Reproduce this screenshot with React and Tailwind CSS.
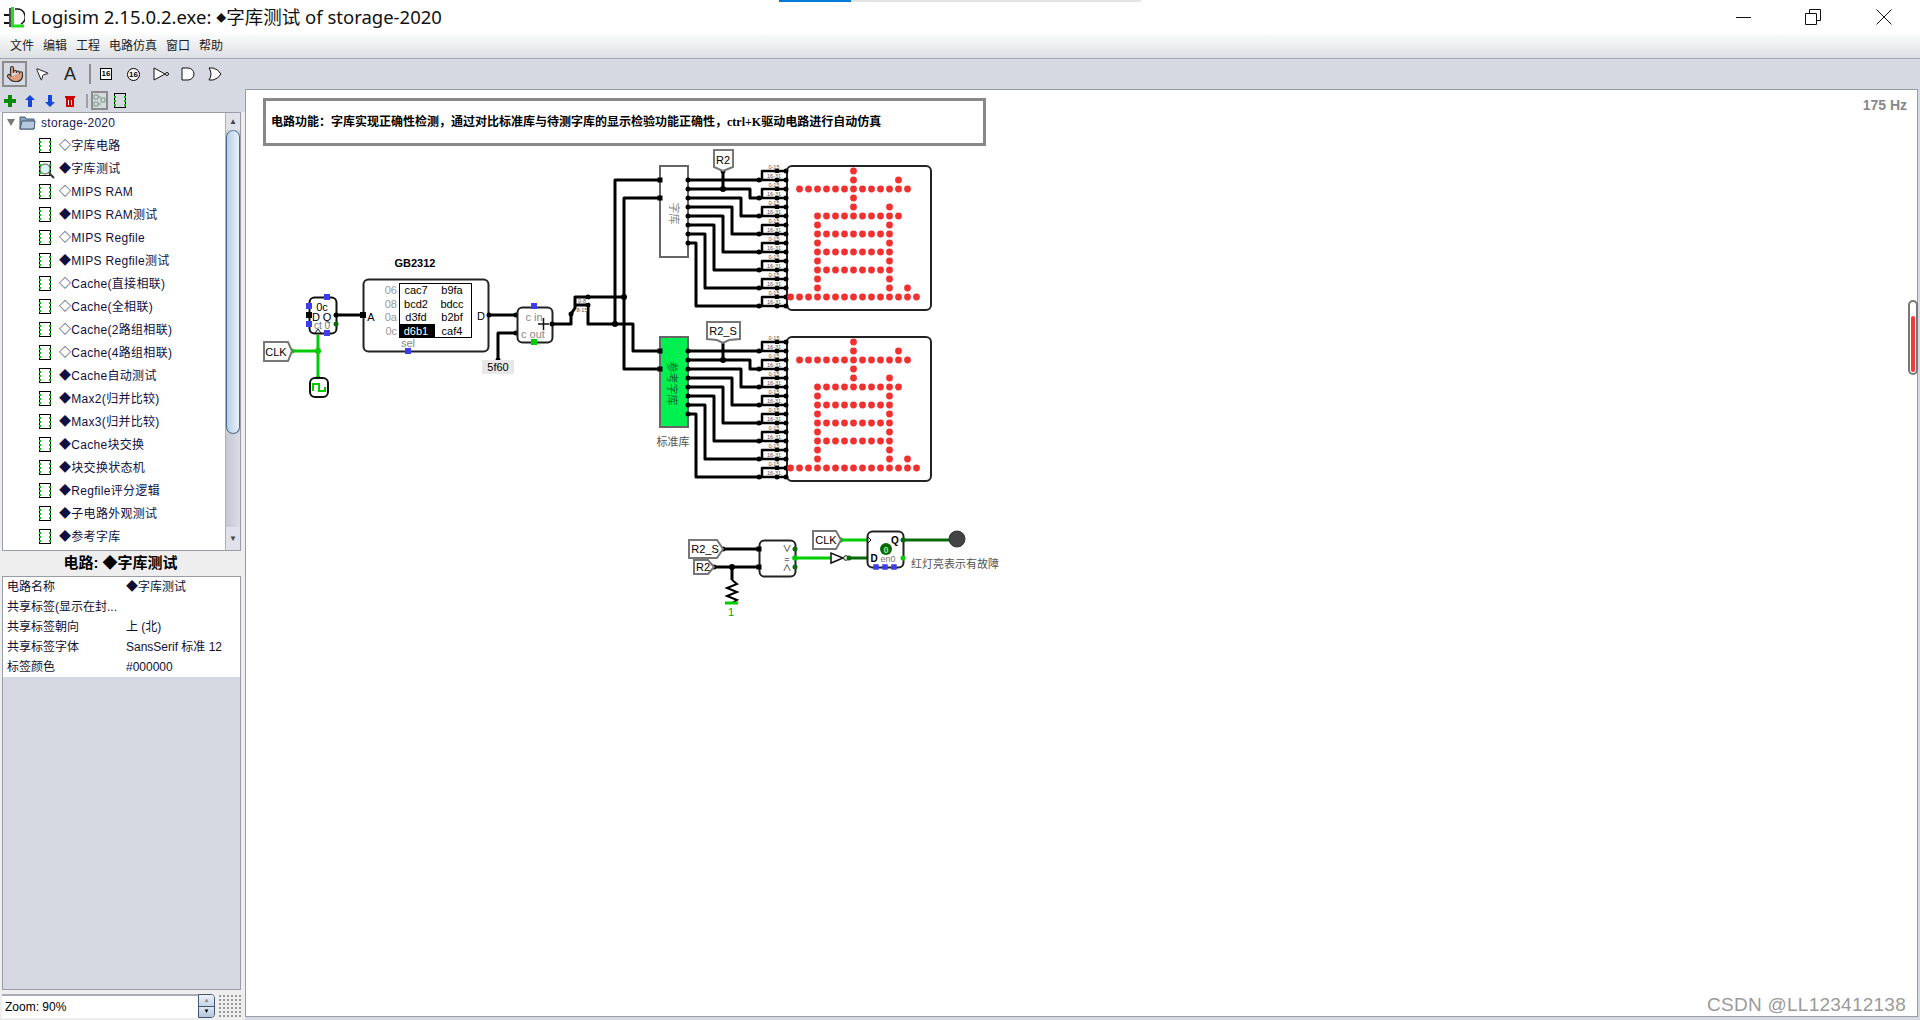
import { MousePointer2, Pointer } from "lucide-react";

const rows = [
  "◇字库电路", "◆字库测试", "◇MIPS RAM", "◆MIPS RAM测试", "◇MIPS Regfile", "◆MIPS Regfile测试",
  "◇Cache(直接相联)", "◇Cache(全相联)", "◇Cache(2路组相联)", "◇Cache(4路组相联)", "◆Cache自动测试",
  "◆Max2(归并比较)", "◆Max3(归并比较)", "◆Cache块交换", "◆块交换状态机", "◆Regfile评分逻辑",
  "◆子电路外观测试", "◆参考字库",
];

const props = [
  ["电路名称", "◆字库测试"],
  ["共享标签(显示在封...", ""],
  ["共享标签朝向", "上 (北)"],
  ["共享标签字体", "SansSerif 标准 12"],
  ["标签颜色", "#000000"],
];

const menus = ["文件", "编辑", "工程", "电路仿真", "窗口", "帮助"];

// 16x16 dot matrix, one [row, from, to] per run of lit dots
const lit = [
  [0, 7, 7], [1, 7, 7], [1, 12, 12], [2, 1, 13], [3, 7, 7], [4, 7, 7], [4, 11, 11], [5, 3, 12],
  [6, 3, 3], [6, 11, 11], [7, 3, 11], [8, 3, 3], [8, 11, 11], [9, 3, 11], [10, 3, 3], [10, 11, 11],
  [11, 3, 11], [12, 3, 3], [12, 11, 11], [13, 3, 3], [13, 11, 11], [13, 13, 13], [14, 0, 14],
];

const range = (n) => Array.from({ length: n }, (_, i) => i);

function Dot({ x, y, r = 2.5, fill = "#000" }) {
  return <circle cx={x} cy={y} r={r} fill={fill} />;
}

function Wire({ d, color = "#000", w = 3 }) {
  return <path d={d} fill="none" stroke={color} strokeWidth={w} strokeLinejoin="round" />;
}

function Sq({ x, y, fill = "#3c3cf0", s = 6 }) {
  return <rect x={x - s / 2} y={y - s / 2} width={s} height={s} fill={fill} />;
}

function Label({ x, y, size = 11, fill = "#000", bold, anchor = "middle", children }) {
  return (
    <text x={x} y={y} fontSize={size} fill={fill} fontWeight={bold ? 700 : 400} textAnchor={anchor} dominantBaseline="central">
      {children}
    </text>
  );
}

function Display({ dy, rom, fill }) {
  const ports = range(8).map((i) => 180 + i * 9 + dy);
  const ends = range(8).map((i) => 180 + i * 18 + dy);
  const bends = [759, 750, 741, 732, 723, 714, 705, 696];
  return (
    <g>
      <rect x="660" y={166 + dy} width="28" height={rom} fill={fill} stroke="#666" strokeWidth="2" />
      {ports.map((y, i) => (
        <g key={y}>
          <Wire d={`M688 ${y} H${bends[i]} V${ends[i]} H762`} />
          <Dot x={688} y={y} />
        </g>
      ))}
      <rect x="787" y={166 + dy} width="144" height="144" rx="5" fill="#fff" stroke="#222" strokeWidth="2" />
      {ends.map((y) => (
        <g key={y}>
          <Wire d={`M762 ${y} V${y - 9} H786 M762 ${y} H786`} w={2.5} />
          <Dot x={759} y={y} />
          <Dot x={777} y={y - 9} />
          <Dot x={777} y={y} />
          <Dot x={786} y={y - 9} />
          <Dot x={786} y={y} />
          <rect x="767" y={y - 7} width="14" height="5" fill="#fff" />
          <Label x={774} y={y - 13.5} size={5.5} fill="#555">0-15</Label>
          <Label x={774} y={y - 4.5} size={5.5} fill="#555">16-31</Label>
        </g>
      ))}
      {lit.map(([row, from, to]) =>
        range(to - from + 1).map((i) => (
          <circle key={`${row}-${from}-${i}`} cx={790.5 + (from + i) * 9} cy={171 + dy + row * 9} r="3.4" fill="#f23030" />
        )),
      )}
    </g>
  );
}

function Circuit() {
  return (
    <svg className="w-full h-full" viewBox="246 90 1671 926" preserveAspectRatio="xMinYMin meet">
      <rect x="264.5" y="99.5" width="720" height="45" fill="#fff" stroke="#888" strokeWidth="3" />
      <text x="271" y="122" fontSize="12" fontWeight="700" dominantBaseline="central">
        {"电路功能\uFF1A字库实现正确性检测\uFF0C通过对比标准库与待测字库的显示检验功能正确性\uFF0C"}
        <tspan fontFamily="Liberation Serif">ctrl+K</tspan>
        驱动电路进行自动仿真
      </text>

      <Label x={415} y={263} bold>GB2312</Label>

      {/* clock and counter */}
      <Wire d="M318 335 V378 M292 351 H318" color="#00cc00" />
      <Dot x={292} y={351} fill="#00cc00" />
      <Dot x={318} y={351} r={3} fill="#00cc00" />
      <Dot x={318} y={378} fill="#00cc00" />
      <path d="M264 342 H288 L292 351 L288 361 H264 Z" fill="#fff" stroke="#777" strokeWidth="2" />
      <Label x={276} y={351.5} size={11}>CLK</Label>
      <rect x="310" y="378" width="18" height="19" rx="5" fill="#fff" stroke="#111" strokeWidth="2" />
      <path d="M313 391 V384 H319 V391 H325 V387" fill="none" stroke="#00cc00" strokeWidth="2" />
      <rect x="309.5" y="297.5" width="27" height="36" rx="5" fill="#fff" stroke="#111" strokeWidth="2" />
      <Sq x={327} y={297} />
      <Sq x={309} y={306} />
      <Sq x={309} y={324} />
      <Sq x={327} y={333} />
      <Sq x={309} y={315} fill="#000" />
      <Dot x={336} y={324} r={2.5} fill="#0a6a0a" />
      <Label x={322} y={307} size={11}>0c</Label>
      <Label x={316} y={317} size={11}>D</Label>
      <Label x={327} y={317} size={11}>Q</Label>
      <Label x={322} y={325} size={10} fill="#777">ct 0</Label>
      <path d="M315 333 L318 329 L321 333" fill="none" stroke="#111" />
      <Wire d="M336 315 H363" />
      <Dot x={336} y={315} />

      {/* rom */}
      <rect x="363.5" y="279.5" width="125" height="72" rx="5" fill="#fff" stroke="#222" strokeWidth="2" />
      <Sq x={363} y={315} fill="#000" />
      <Label x={371} y={317} size={11}>A</Label>
      <Label x={481} y={316} size={11}>D</Label>
      <rect x="399.5" y="283.5" width="72" height="54" fill="#fff" stroke="#000" />
      <rect x="399" y="324" width="36" height="13" fill="#000" />
      {[["06", "cac7", "b9fa", 290], ["08", "bcd2", "bdcc", 304], ["0a", "d3fd", "b2bf", 317], ["0c", "d6b1", "caf4", 331]].map(([a, b, c, y]) => (
        <g key={a}>
          <Label x={397} y={y} anchor="end" fill="#999">{a}</Label>
          <Label x={416} y={y} fill={a === "0c" ? "#fff" : "#000"}>{b}</Label>
          <Label x={452} y={y}>{c}</Label>
        </g>
      ))}
      <Label x={408} y={343} fill="#888">sel</Label>
      <Sq x={408} y={351} />

      {/* adder and splitter */}
      <Wire d="M489 315 H517 M517 333 H498 V360" />
      <Dot x={489} y={315} />
      <Dot x={516} y={315} />
      <Dot x={516} y={333} />
      <Dot x={498} y={360} />
      <rect x="482" y="360" width="32" height="14" fill="#e8e8e8" />
      <Label x={498} y={367}>5f60</Label>
      <rect x="517.5" y="307.5" width="35" height="35" rx="5" fill="#fff" stroke="#222" strokeWidth="2" />
      <Sq x={534} y={306} />
      <Sq x={534} y={342} fill="#00cc00" />
      <Label x={534} y={317} fill="#888">c in</Label>
      <Label x={533} y={334} fill="#888">c out</Label>
      <path d="M538 324 H549 M543.500 318 V330" stroke="#111" strokeWidth="1.500" />
      <Dot x={552} y={324} />
      <Wire d="M552 324 H571 V314 L575 308 V297 H624 M575 305 H588 V324 H633 V351 H660" />
      <Dot x={571} y={314} />
      <Dot x={588} y={297} />
      <Dot x={588} y={305} />
      <rect x="577" y="299" width="11" height="4" fill="#fff" />
      <Label x={582} y={301} size={5.500} fill="#555">0-8</Label>
      <rect x="577" y="307" width="10" height="4" fill="#fff" />
      <Label x={582} y={310} size={5.500} fill="#555">8-15</Label>
      <Wire d="M660 198 H624 V369 H660 M660 180 H615 V324" />
      <Dot x={624} y={297} r={3} />
      <Dot x={615} y={324} r={3} />

      <Display dy={0} rom={91} fill="#fff" />
      <Display dy={171} rom={90} fill="#00f050" />
      <Sq x={660} y={180} fill="#000" s={5} />
      <Sq x={660} y={198} fill="#000" s={5} />
      <Sq x={660} y={351} fill="#000" s={5} />
      <Sq x={660} y={369} fill="#000" s={5} />
      <text transform="translate(674 213.500) rotate(90)" fontSize="11" fill="#888" textAnchor="middle" dominantBaseline="central">字库</text>
      <text transform="translate(672 383.500) rotate(90)" fontSize="11" fill="#0a6a30" textAnchor="middle" dominantBaseline="central">参考字库</text>
      <Label x={673} y={442} fill="#555">标准库</Label>

      {/* R2 tags */}
      <Wire d="M723 171 V189" />
      <Dot x={723} y={171} />
      <Dot x={723} y={189} r={3} />
      <path d="M714 150 H733 V167 L723 171 L714 167 Z" fill="#fff" stroke="#777" strokeWidth="2" />
      <Label x={723} y={160}>R2</Label>
      <Wire d="M723 343 V360" />
      <Dot x={723} y={360} r={3} />
      <path d="M707 322 H740 V339 L729 340 L723 343 L717 340 L707 339 Z" fill="#fff" stroke="#777" strokeWidth="2" />
      <Label x={723} y={331}>R2_S</Label>

      {/* comparator row */}
      <Wire d="M723 549 H759 M714 567 H759 M732 567 V580" />
      <Dot x={723} y={549} />
      <Dot x={714} y={567} />
      <Dot x={732} y={567} r={3} />
      <path d="M732 580 L737 584 L727 588 L737 592 L727 596 L737 600 L732 603" fill="none" stroke="#000" strokeWidth="2" />
      <Wire d="M725 603 H738" color="#00cc00" />
      <Label x={731} y={612} fill="#00aa00">1</Label>
      <path d="M689 540 H717 L723 549 L717 558 H689 Z" fill="#fff" stroke="#777" strokeWidth="2" />
      <Label x={705} y={549}>R2_S</Label>
      <path d="M694 560 H708 L714 567 L708 574 H694 Z" fill="#fff" stroke="#777" strokeWidth="2" />
      <Label x={703} y={567}>R2</Label>
      <rect x="759.500" y="540.500" width="36" height="36" rx="5" fill="#fff" stroke="#222" strokeWidth="2" />
      <Sq x={759} y={549} fill="#000" s={5} />
      <Sq x={759} y={567} fill="#000" s={5} />
      <Label x={787} y={549} size={9}>∨</Label>
      <Label x={787} y={558.500} size={9}>=</Label>
      <Label x={787} y={568} size={9}>∧</Label>
      <Wire d="M796 558 H831" color="#00cc00" />
      <Dot x={795} y={549} fill="#0a6a0a" />
      <Dot x={795} y={558} r={2.800} fill="#00cc00" />
      <Dot x={795} y={567} fill="#0a6a0a" />
      <path d="M831 553 V563 L843 558 Z" fill="#fff" stroke="#111" strokeWidth="1.500" />
      <circle cx="846" cy="558" r="2.300" fill="#fff" stroke="#111" />
      <Wire d="M849 558 H867" color="#0a6a0a" />
      <Dot x={849} y={558} fill="#0a6a0a" />
      <Wire d="M841 540 H867" color="#00cc00" />
      <Dot x={841} y={540} fill="#00cc00" />
      <path d="M813 531 H836 L841 540 L836 549 H813 Z" fill="#fff" stroke="#777" strokeWidth="2" />
      <Label x={826} y={540}>CLK</Label>
      <rect x="867.500" y="531.500" width="36" height="36" rx="5" fill="#fff" stroke="#222" strokeWidth="2" />
      <path d="M868 537 L871 540 L868 543" fill="none" stroke="#111" />
      <Label x={874} y={558} size={10} bold>D</Label>
      <Label x={895} y={540.500} size={10} bold>Q</Label>
      <circle cx="886" cy="549" r="6" fill="#0a6a0a" />
      <Label x={886} y={549.500} size={9} fill="#9be89b" bold>0</Label>
      <Label x={888} y={559} size={9} fill="#777">en0</Label>
      <Sq x={876} y={567} s={5.500} />
      <Sq x={885} y={567} s={5.500} />
      <Sq x={894} y={567} s={5.500} />
      <Dot x={903} y={558} fill="#00cc00" />
      <Wire d="M903 540 H950" color="#0a6a0a" />
      <Dot x={903} y={540} fill="#0a6a0a" />
      <circle cx="957" cy="539" r="8" fill="#444" stroke="#333" />
      <Label x={911} y={564} fill="#555" anchor="start">红灯亮表示有故障</Label>

      <text x="1907" y="105" fontSize="14" fontWeight="700" fill="#888" textAnchor="end" dominantBaseline="central">175 Hz</text>
    </svg>
  );
}

function CircuitIcon({ zoomed }) {
  return (
    <span className="block relative w-[12px] h-[15px] shrink-0 border border-black">
      {[2, 6, 10].map((t) => (
        <span key={t} className="absolute left-[-1px] w-[2px] h-[2px] bg-[#00c000]" style={{ top: t }} />
      ))}
      {[2, 6, 10].map((t) => (
        <span key={t} className="absolute right-[-1px] w-[2px] h-[2px] bg-[#00c000]" style={{ top: t }} />
      ))}
      {zoomed && (
        <svg className="absolute left-[-1px] top-[1px]" width="16" height="16" viewBox="0 0 16 16">
          <circle cx="6" cy="6" r="5" fill="#d8f4f0" stroke="#555" />
          <path d="M10 10 L15 15" stroke="#333" strokeWidth="2" />
        </svg>
      )}
    </span>
  );
}

function Toolbar() {
  return (
    <div className="flex items-center h-[30px] pl-[2px] bg-[#d6d9e2] shrink-0 text-black">
      <div className="w-[25px] h-[26px] flex items-center justify-center border-2 border-[#8c8c8c]">
        <Pointer size={18} fill="#e0a080" stroke="#333" strokeWidth={1.500} />
      </div>
      <div className="w-[28px] ml-[1px] flex justify-center">
        <MousePointer2 size={16} fill="#fff" stroke="#222" strokeWidth={1.500} />
      </div>
      <div className="w-[28px] flex justify-center text-[18px] leading-none font-medium text-[#222]">A</div>
      <div className="w-[2px] h-[20px] ml-[5px] mr-[9px] bg-[#8e8e8e]" />
      <div className="w-[12px] h-[12px] border border-black bg-white text-[8px] leading-[10px] text-center font-bold">16</div>
      <div className="w-[13px] h-[13px] ml-[15px] rounded-full border border-black bg-white text-[8px] leading-[11px] text-center font-bold">16</div>
      <svg className="ml-[13px]" width="16" height="14" viewBox="0 0 16 14">
        <path d="M1 1 V13 L12 7 Z" fill="#fff" stroke="#111" />
        <circle cx="14" cy="7" r="1.500" fill="#fff" stroke="#111" />
      </svg>
      <svg className="ml-[12px]" width="14" height="14" viewBox="0 0 14 14">
        <path d="M1 1 H7 A6 6 0 0 1 7 13 H1 Z" fill="#fff" stroke="#111" />
      </svg>
      <svg className="ml-[13px]" width="14" height="14" viewBox="0 0 14 14">
        <path d="M1 1 H5 Q10 2 13 7 Q10 12 5 13 H1 Q5 7 1 1 Z" fill="#fff" stroke="#111" />
      </svg>
    </div>
  );
}

function ProjectBar() {
  return (
    <div className="flex items-center h-[23px] pl-[4px] shrink-0">
      <svg width="12" height="12" viewBox="0 0 12 12">
        <path d="M4 0 H8 V4 H12 V8 H8 V12 H4 V8 H0 V4 H4 Z" fill="#0a8a0a" />
      </svg>
      <svg className="ml-[9px]" width="10" height="12" viewBox="0 0 10 12">
        <path d="M5 0 L10 5 H7 V12 H3 V5 H0 Z" fill="#1446d8" />
      </svg>
      <svg className="ml-[10px]" width="10" height="12" viewBox="0 0 10 12">
        <path d="M5 12 L10 7 H7 V0 H3 V7 H0 Z" fill="#1446d8" />
      </svg>
      <svg className="ml-[10px]" width="10" height="12" viewBox="0 0 10 12">
        <path d="M0 1 H10 V3 H0 Z M1 3 H9 V12 H1 Z" fill="#cc0000" />
        <path d="M3.500 5 V10 M6.500 5 V10" stroke="#fff" />
      </svg>
      <div className="w-[2px] h-[14px] ml-[11px] bg-[#a0a0a0]" />
      <div className="w-[17px] h-[19px] ml-[3px] flex items-center justify-center border-2 border-[#8c8c8c]">
        <svg width="13" height="13" viewBox="0 0 13 13">
          <path d="M1 1 H5 V5 H1 Z M8 4 H12 V8 H8 Z M1 8 H5 V12 H1 Z M5 3 H8 M5 10 H8" fill="none" stroke="#7c9a7c" />
        </svg>
      </div>
      <div className="ml-[6px]">
        <CircuitIcon />
      </div>
    </div>
  );
}

function TreeScrollbar() {
  return (
    <div className="flex flex-col w-[15px] shrink-0 border-l border-[#aab0bc] bg-[#d2d5de]">
      <div className="h-[17px] flex items-center justify-center text-[8px] text-[#444] bg-[#dfe2ea]">▲</div>
      <div className="h-[304px] rounded-[8px] border border-[#4c6a8c] border-t-[#6a85a5] bg-gradient-to-r from-[#b6cfe6] to-[#eaf2fa]" />
      <div className="flex-1 bg-gradient-to-r from-[#c6c9d2] to-[#dadde4]" />
      <div className="h-[23px] flex items-center justify-center text-[8px] text-[#444] bg-[#dfe2ea]">▼</div>
    </div>
  );
}

function Sidebar() {
  return (
    <div className="flex flex-col w-[245px] shrink-0 bg-[#eeeeee]">
      <div className="bg-[#d6d9e2]">
        <ProjectBar />
      </div>
      <div className="flex h-[439px] mx-[2px] w-[239px] shrink-0 border border-[#9a9ca8] bg-white text-[12px] text-[#101040] tracking-[0.3px]">
        <div className="flex-1 overflow-hidden">
          <div className="flex items-center h-[21px] pl-[4px] pb-[2px] text-[#202050]">
            <span className="w-0 h-0 border-x-[4px] border-x-transparent border-t-[7px] border-t-[#777]" />
            <svg className="ml-[4px]" width="17" height="15" viewBox="0 0 17 15">
              <path d="M1 14 V2 H6 L7 4 H15 V14 Z" fill="#8aa6c8" stroke="#44566e" />
              <path d="M1 14 L3 6 H16 L15 14 Z" fill="#b4c8de" stroke="#44566e" />
            </svg>
            <span className="ml-[5px]">storage-2020</span>
          </div>
          {rows.map((name, i) => (
            <div key={name} className="flex items-center h-[23px] pl-[36px]">
              <CircuitIcon zoomed={i === 1} />
              <span className="ml-[8px] whitespace-nowrap">{name}</span>
            </div>
          ))}
        </div>
        <TreeScrollbar />
      </div>
      <div className="h-[25px] flex items-center justify-center text-[15px] font-bold text-black shrink-0 pr-[4px]">电路: ◆字库测试</div>
      <div className="flex-1 flex flex-col mx-[2px] w-[239px] border border-[#9a9ca8] bg-[#d6d9e2] text-[12px] text-[#101030]">
        <div className="bg-white">
          {props.map(([k, v]) => (
            <div key={k} className="flex items-center h-[20px]">
              <span className="w-[123px] pl-[4px] whitespace-nowrap">{k}</span>
              <span className="whitespace-nowrap">{v}</span>
            </div>
          ))}
        </div>
      </div>
      <div className="flex items-center h-[30px] pl-[2px] shrink-0 pb-[2px] pt-[4px]">
        <div className="flex-1 max-w-[196px] h-full pl-[3px] flex items-center bg-white border-t-2 border-[#a8acb8] text-[12px] text-black">Zoom: 90%</div>
        <div className="flex flex-col w-[17px] h-full rounded-r-[4px] border border-[#44566e] overflow-hidden">
          <div className="flex-1 flex items-center justify-center text-[6px] text-[#888] bg-gradient-to-b from-[#eef2f8] to-[#c4d4e6]">▲</div>
          <div className="flex-1 flex items-center justify-center text-[6px] text-black bg-gradient-to-b from-[#dde6f0] to-[#b0c6dc] border-t border-[#44566e]">▼</div>
        </div>
        <div className="w-[24px] h-full ml-[3px] bg-[radial-gradient(#999_1px,transparent_1px)] bg-[length:4px_4px]" />
      </div>
    </div>
  );
}

export default function App() {
  return (
    <div className="relative flex flex-col w-[1920px] h-[1020px] overflow-hidden bg-[#d6d9e2] font-['Liberation_Sans','Noto_Sans_CJK_SC',sans-serif]">
      <div className="absolute top-0 left-[779px] w-[72px] h-[2px] bg-[#0078d7]" />
      <div className="absolute top-0 left-[851px] w-[290px] h-[2px] bg-[#e3e3e3]" />

      {/* title bar */}
      <div className="flex items-center h-[34px] shrink-0 bg-white">
        <svg className="ml-[3px]" width="22" height="22" viewBox="0 0 22 22">
          <path d="M7 2 V21" stroke="#111" strokeWidth="1.500" />
          <path d="M12 3 H14 A8 8 0 0 1 18 18" fill="none" stroke="#111" strokeWidth="1.500" />
          <path d="M1 9 H6 M1 17 H6" stroke="#111" strokeWidth="2" />
          <path d="M9.500 1 V20 H21" fill="none" stroke="#20e020" strokeWidth="3" />
        </svg>
        <div className="ml-[6px] text-[18.500px] text-[#111] font-['Noto_Sans','Noto_Sans_CJK_SC',sans-serif]">
          Logisim 2.15.0.2.exe: <span className="text-[10px] align-[2px]">◆</span>字库测试 of storage-2020
        </div>
        <svg className="ml-auto" width="15" height="3" viewBox="0 0 15 3"><path d="M0 1.500 H15" stroke="#111" /></svg>
        <svg className="ml-[54px]" width="16" height="16" viewBox="0 0 16 16">
          <path d="M.5 4.500 H11.500 V15.500 H.5 Z M4.500 4 V.5 H15.500 V11.500 H12" fill="none" stroke="#111" />
        </svg>
        <svg className="ml-[55px] mr-[28px]" width="16" height="16" viewBox="0 0 16 16">
          <path d="M.5 .5 L15.500 15.500 M15.500 .5 L.5 15.500" stroke="#111" />
        </svg>
      </div>

      {/* menu bar */}
      <div className="flex items-center h-[25px] shrink-0 pl-[10px] gap-[9px] text-[12px] text-[#222] bg-gradient-to-b from-[#fbfcfb] to-[#dcdfe3] border-b border-[#a4a7b2]">
        {menus.map((m) => (
          <span key={m}>{m}</span>
        ))}
      </div>

      <Toolbar />

      <div className="flex flex-1 min-h-0">
        <Sidebar />
        <div className="flex-1 mb-[3px] mr-[2px] bg-white border border-[#999ba6]">
          <Circuit />
        </div>
      </div>

      <div className="absolute left-[1908px] top-[300px] w-[10px] h-[75px] rounded-[5px] border-2 border-[#777] bg-white p-[1px] pt-[14px]">
        <div className="w-full h-full rounded-[2px] bg-[#f23a3a]" />
      </div>
      <div className="absolute right-[14px] top-[991px] text-[19px] text-[#9a9a9a] tracking-[0.25px]">CSDN @LL123412138</div>
    </div>
  );
}
